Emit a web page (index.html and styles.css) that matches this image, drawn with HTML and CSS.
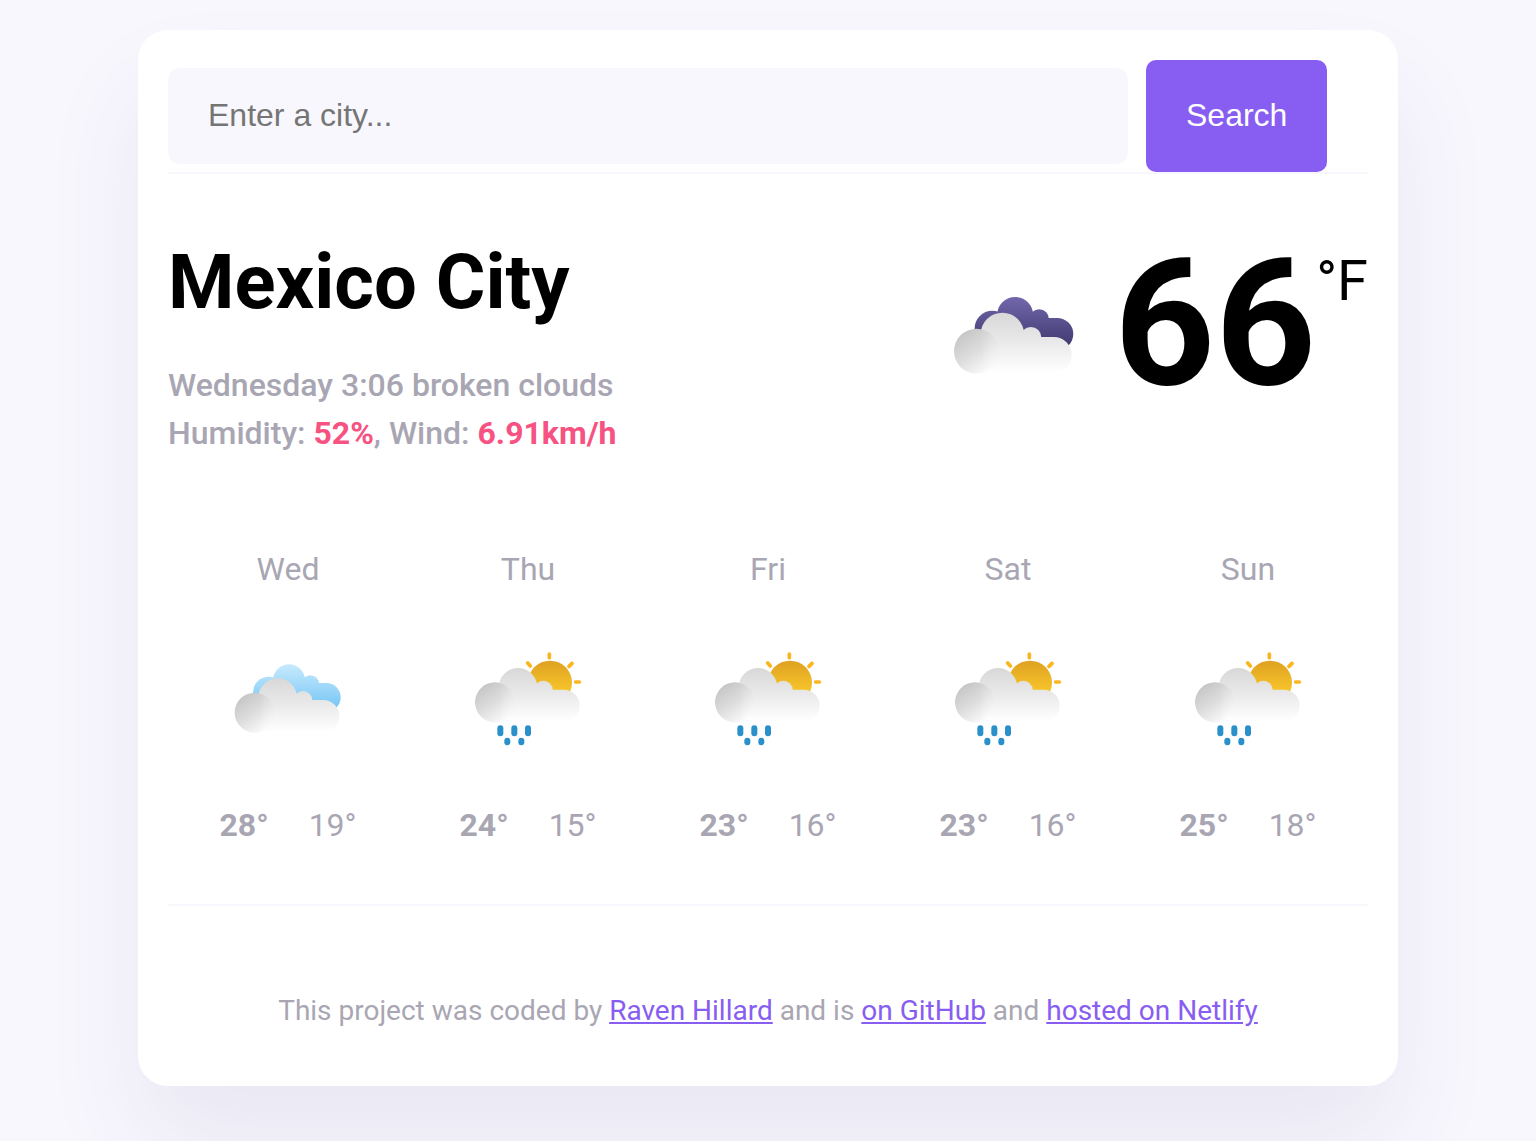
FILE: index.html
```html
<!DOCTYPE html>
<html lang="en">
<head>
<meta charset="utf-8">
<meta name="viewport" content="width=device-width, initial-scale=1">
<title>Weather App</title>
<link rel="stylesheet" href="styles.css">
</head>
<body>
<svg class="sprite" aria-hidden="true">
  <defs>
    <linearGradient id="cloud-fill" gradientUnits="userSpaceOnUse" x1="0" y1="84" x2="0" y2="244">
      <stop offset="0" stop-color="#d8d8d8"/><stop offset="0.45" stop-color="#e8e8e8"/><stop offset="1" stop-color="#ffffff"/>
    </linearGradient>
    <linearGradient id="puff-fill" gradientUnits="userSpaceOnUse" x1="66" y1="140" x2="138" y2="242">
      <stop offset="0" stop-color="#c6c6c6"/><stop offset="0.5" stop-color="#dedede"/><stop offset="1" stop-color="#fcfcfc"/>
    </linearGradient>
    <linearGradient id="puff-fade" gradientUnits="userSpaceOnUse" x1="120" y1="0" x2="166" y2="0">
      <stop offset="0" stop-color="#ffffff"/><stop offset="1" stop-color="#ffffff" stop-opacity="0.25"/>
    </linearGradient>
    <mask id="puff-mask" maskUnits="userSpaceOnUse" x="40" y="120" width="130" height="134"><rect x="40" y="120" width="130" height="134" fill="url(#puff-fade)"/></mask>
    <linearGradient id="night-fill" gradientUnits="userSpaceOnUse" x1="0" y1="72" x2="0" y2="205">
      <stop offset="0" stop-color="#7268ac"/><stop offset="1" stop-color="#413a70"/>
    </linearGradient>
    <linearGradient id="sky-fill" gradientUnits="userSpaceOnUse" x1="0" y1="72" x2="0" y2="205">
      <stop offset="0" stop-color="#c8eafd"/><stop offset="1" stop-color="#76c6f5"/>
    </linearGradient>
    <linearGradient id="sun-fill" gradientUnits="userSpaceOnUse" x1="0" y1="62" x2="0" y2="160">
      <stop offset="0" stop-color="#dfa122"/><stop offset="1" stop-color="#f9c72b"/>
    </linearGradient>
    <g id="front-cloud">
      <g fill="url(#cloud-fill)">
        <circle cx="174" cy="142" r="58"/>
        <circle cx="250" cy="150" r="28"/>
        <path d="M104 245L130 149H311A48 48 0 0 1 311 245Z"/>
      </g>
      <circle cx="105" cy="187" r="60" fill="url(#puff-fill)" mask="url(#puff-mask)"/>
    </g>
    <g id="back-cloud">
      <circle cx="176" cy="157" r="47"/>
      <circle cx="237" cy="121" r="48"/>
      <circle cx="301" cy="132" r="26"/>
      <circle cx="349" cy="172" r="43"/>
      <path d="M200 129H350V205H200Z"/>
    </g>
    <symbol id="clouds-night" viewBox="42 -12 384 384">
      <use href="#back-cloud" fill="url(#night-fill)"/>
      <use href="#front-cloud" x="29" y="31"/>
    </symbol>
    <symbol id="clouds-day" viewBox="42 -12 384 384">
      <use href="#back-cloud" fill="url(#sky-fill)"/>
      <use href="#front-cloud" x="29" y="31"/>
    </symbol>
    <symbol id="rain-day" viewBox="12 -12 384 384">
      <path stroke="#fdb51d" stroke-width="11" stroke-linecap="round" d="M268 42V53M203 69L211 78M336 70L327 79M347 126H358"/>
      <circle cx="270" cy="128" r="66" fill="url(#sun-fill)"/>
      <use href="#front-cloud"/>
      <g fill="#2b8fca">
        <rect x="112" y="256" width="18" height="33" rx="9"/><rect x="154" y="256" width="18" height="33" rx="9"/><rect x="195" y="256" width="18" height="33" rx="9"/>
        <rect x="133" y="293" width="18" height="23" rx="9"/><rect x="175" y="293" width="18" height="23" rx="9"/>
      </g>
    </symbol>
  </defs>
</svg>

<main class="weather-app">
  <header>
    <form class="search-form">
      <input class="search-input" type="search" placeholder="Enter a city..." aria-label="City" required>
      <button class="search-button" type="submit">Search</button>
    </form>
  </header>

  <section class="current">
    <div class="current-info">
      <h1>Mexico City</h1>
      <p class="details">Wednesday 3:06 broken clouds<br>Humidity: <strong>52%</strong>, Wind: <strong>6.91km/h</strong></p>
    </div>
    <div class="temperature">
      <svg class="temperature-icon" role="img" aria-label="Broken clouds"><use href="#clouds-night"/></svg>
      <span class="temperature-value">66</span>
      <span class="temperature-unit">°F</span>
    </div>
  </section>

  <section class="forecast">
    <div class="day"><div class="day-name">Wed</div><svg class="day-icon" role="img" aria-label="Clouds"><use href="#clouds-day"/></svg><div class="day-temps"><strong>28°</strong><span>19°</span></div></div>
    <div class="day"><div class="day-name">Thu</div><svg class="day-icon" role="img" aria-label="Rain"><use href="#rain-day"/></svg><div class="day-temps"><strong>24°</strong><span>15°</span></div></div>
    <div class="day"><div class="day-name">Fri</div><svg class="day-icon" role="img" aria-label="Rain"><use href="#rain-day"/></svg><div class="day-temps"><strong>23°</strong><span>16°</span></div></div>
    <div class="day"><div class="day-name">Sat</div><svg class="day-icon" role="img" aria-label="Rain"><use href="#rain-day"/></svg><div class="day-temps"><strong>23°</strong><span>16°</span></div></div>
    <div class="day"><div class="day-name">Sun</div><svg class="day-icon" role="img" aria-label="Rain"><use href="#rain-day"/></svg><div class="day-temps"><strong>25°</strong><span>18°</span></div></div>
  </section>

  <footer>
    This project was coded by <a href="#">Raven Hillard</a> and is <a href="#">on GitHub</a> and <a href="#">hosted on Netlify</a>
  </footer>
</main>
</body>
</html>
```
FILE: styles.css
```css
* {
  box-sizing: border-box;
}

body {
  min-height: 100vh;
  margin: 0;
  padding: 30px;
  background: #f8f7fe;
  color: #000;
  font-family: Roboto, sans-serif;
}

.sprite {
  position: absolute;
  width: 0;
  height: 0;
}

.weather-app {
  max-width: 1260px;
  margin: 0 auto;
  padding: 30px;
  border-radius: 30px;
  background: #fff;
  box-shadow: 0 60px 100px rgba(65, 50, 100, 0.08);
}

header {
  border-bottom: 2px solid #f8f7fe;
}

.search-form {
  display: flex;
  align-items: center;
  gap: 18px;
}

.search-input,
.search-button {
  border: none;
  border-radius: 12px;
  font-family: "Liberation Sans", Arial, sans-serif;
  font-size: 32px;
  line-height: 36px;
}

.search-input {
  width: 80%;
  padding: 29px 40px 31px;
  background: #f8f7fe;
  appearance: none;
}

.search-input::placeholder {
  color: #757575;
}

.search-button {
  padding: 37px 40px 39px;
  border-radius: 10px;
  background: #885df1;
  color: #fff;
}

.current {
  display: flex;
  justify-content: space-between;
  align-items: flex-start;
  padding-top: 60px;
}

h1 {
  margin: 0;
  font-size: 76px;
  font-weight: 700;
  line-height: 96px;
}

.details {
  margin: 31px 0 0;
  color: #a9a6b3;
  font-size: 32px;
  font-weight: 500;
  line-height: 48px;
}

.details strong {
  color: #f65282;
  font-weight: 700;
}

.temperature {
  display: flex;
  align-items: flex-start;
}

.temperature-icon {
  width: 144px;
  height: 144px;
  margin: 31px 28px 0 0;
}

.temperature-value {
  padding-top: 2px;
  font-size: 176px;
  font-weight: 700;
  line-height: 176px;
}

.temperature-unit {
  padding-top: 15px;
  font-size: 56px;
  line-height: 64px;
}

.forecast {
  display: grid;
  grid-template-columns: repeat(5, 1fr);
  padding: 88px 0 55px;
  color: #a9a6b3;
  font-size: 32px;
  line-height: 48px;
  text-align: center;
}

.day-icon {
  display: block;
  width: 128px;
  height: 128px;
  margin: 43px auto 37px;
}

.day-temps {
  display: flex;
  justify-content: center;
  gap: 40px;
}

.day-temps strong {
  font-weight: 700;
}

footer {
  padding: 84px 0 24px;
  border-top: 2px solid #f8f7fe;
  color: #a9a6b3;
  font-size: 28px;
  line-height: 42px;
  text-align: center;
}

footer a {
  color: #885df1;
}
```
